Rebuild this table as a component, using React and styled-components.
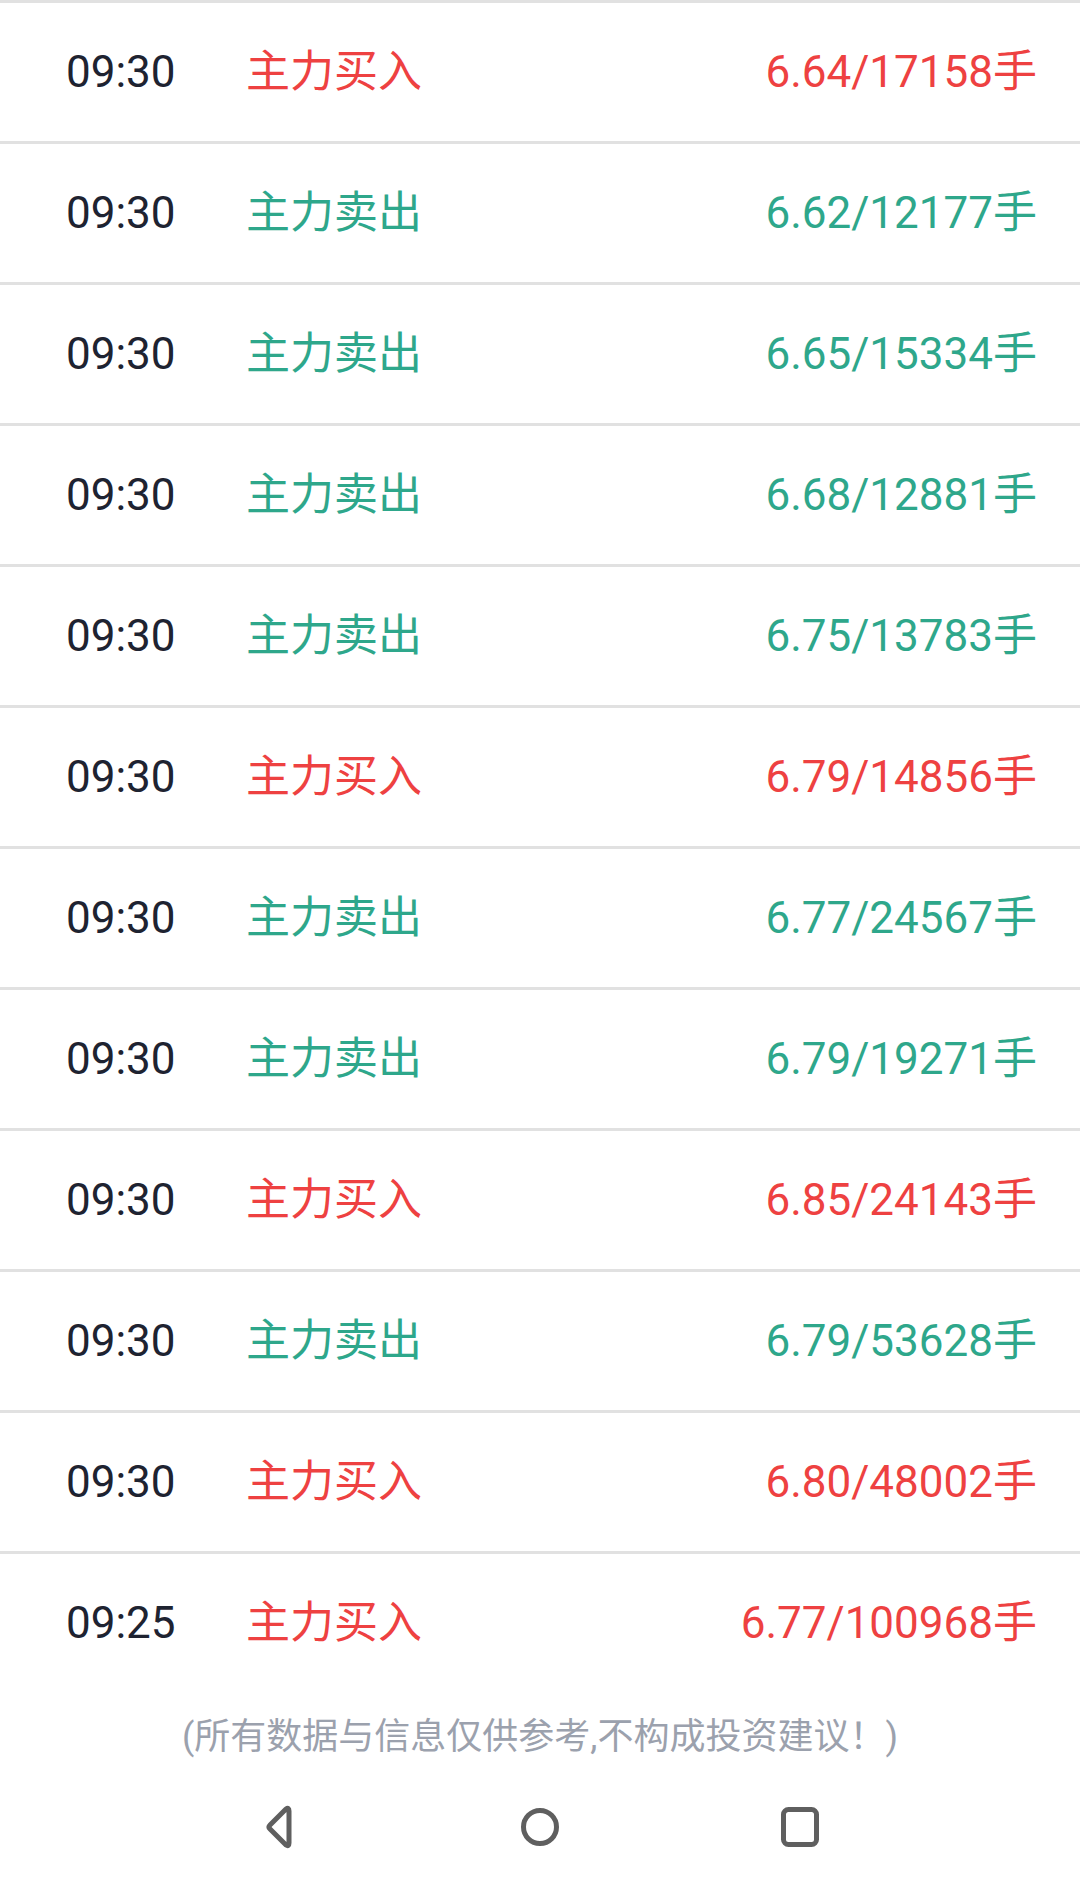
import React from "react";
import styled, { createGlobalStyle } from "styled-components";

// 主力动向列表
const GlobalStyle = createGlobalStyle`
  html, body {
    margin: 0;
    padding: 0;
    background: #ffffff;
  }
  body {
    font-family: Roboto, "Noto Sans CJK SC", sans-serif;
  }
`;

const Page = styled.div`
  width: 1080px;
  height: 1881px;
  background: #ffffff;
  display: flex;
  flex-direction: column;
  overflow: hidden;
`;

const List = styled.div`
  display: flex;
  flex-direction: column;
`;

const Row = styled.div`
  box-sizing: border-box;
  height: 141px;
  border-top: 3px solid #e1e1e1;
  display: grid;
  grid-template-columns: 180px auto 1fr;
  align-content: center;
  align-items: baseline;
  padding: 0 43px 0 66px;
  font-size: 44px;
  line-height: 1;
`;

const Time = styled.span`
  color: #1e2331;
`;

const Kind = styled.span`
  color: ${(p) => (p.$buy ? "#ee4141" : "#2ea78b")};
`;

const Value = styled.span`
  justify-self: end;
  color: ${(p) => (p.$buy ? "#ee4141" : "#2ea78b")};
`;

const Footer = styled.div`
  height: 81px;
  display: flex;
  align-items: center;
  justify-content: center;
  color: #9ba1ad;
  font-size: 36px;
`;

const NavBar = styled.div`
  height: 108px;
  display: flex;
  align-items: center;
  justify-content: center;
  gap: 200px;
`;

const NavBtn = styled.div`
  width: 60px;
  height: 60px;
  display: flex;
  align-items: center;
  justify-content: center;
`;

const rows = [
  { t: "09:30", buy: true, v: "6.64/17158手" },
  { t: "09:30", buy: false, v: "6.62/12177手" },
  { t: "09:30", buy: false, v: "6.65/15334手" },
  { t: "09:30", buy: false, v: "6.68/12881手" },
  { t: "09:30", buy: false, v: "6.75/13783手" },
  { t: "09:30", buy: true, v: "6.79/14856手" },
  { t: "09:30", buy: false, v: "6.77/24567手" },
  { t: "09:30", buy: false, v: "6.79/19271手" },
  { t: "09:30", buy: true, v: "6.85/24143手" },
  { t: "09:30", buy: false, v: "6.79/53628手" },
  { t: "09:30", buy: true, v: "6.80/48002手" },
  { t: "09:25", buy: true, v: "6.77/100968手" },
];

const App = () => {
  return (
    <Page>
      <GlobalStyle />
      <List>
        {rows.map((r, i) => (
          <Row key={i}>
            <Time>{r.t}</Time>
            <Kind $buy={r.buy}>{r.buy ? "主力买入" : "主力卖出"}</Kind>
            <Value $buy={r.buy}>{r.v}</Value>
          </Row>
        ))}
      </List>
      <Footer>(所有数据与信息仅供参考,不构成投资建议！)</Footer>
      <NavBar>
        <NavBtn>
          <svg width="40" height="44" viewBox="0 0 40 44">
            <path
              d="M29 6 L29 38 Q29 42 26 40 L10 24 Q8 22 10 20 L26 4 Q29 2 29 6 Z"
              fill="none"
              stroke="#5f5f5f"
              strokeWidth="5"
              strokeLinejoin="round"
            />
          </svg>
        </NavBtn>
        <NavBtn>
          <svg width="44" height="44" viewBox="0 0 44 44">
            <circle cx="22" cy="22" r="16.5" fill="none" stroke="#5f5f5f" strokeWidth="5" />
          </svg>
        </NavBtn>
        <NavBtn>
          <svg width="44" height="44" viewBox="0 0 44 44">
            <rect x="5.5" y="4.5" width="33" height="35" rx="5" fill="none" stroke="#5f5f5f" strokeWidth="5" />
          </svg>
        </NavBtn>
      </NavBar>
    </Page>
  );
};

export default App;
